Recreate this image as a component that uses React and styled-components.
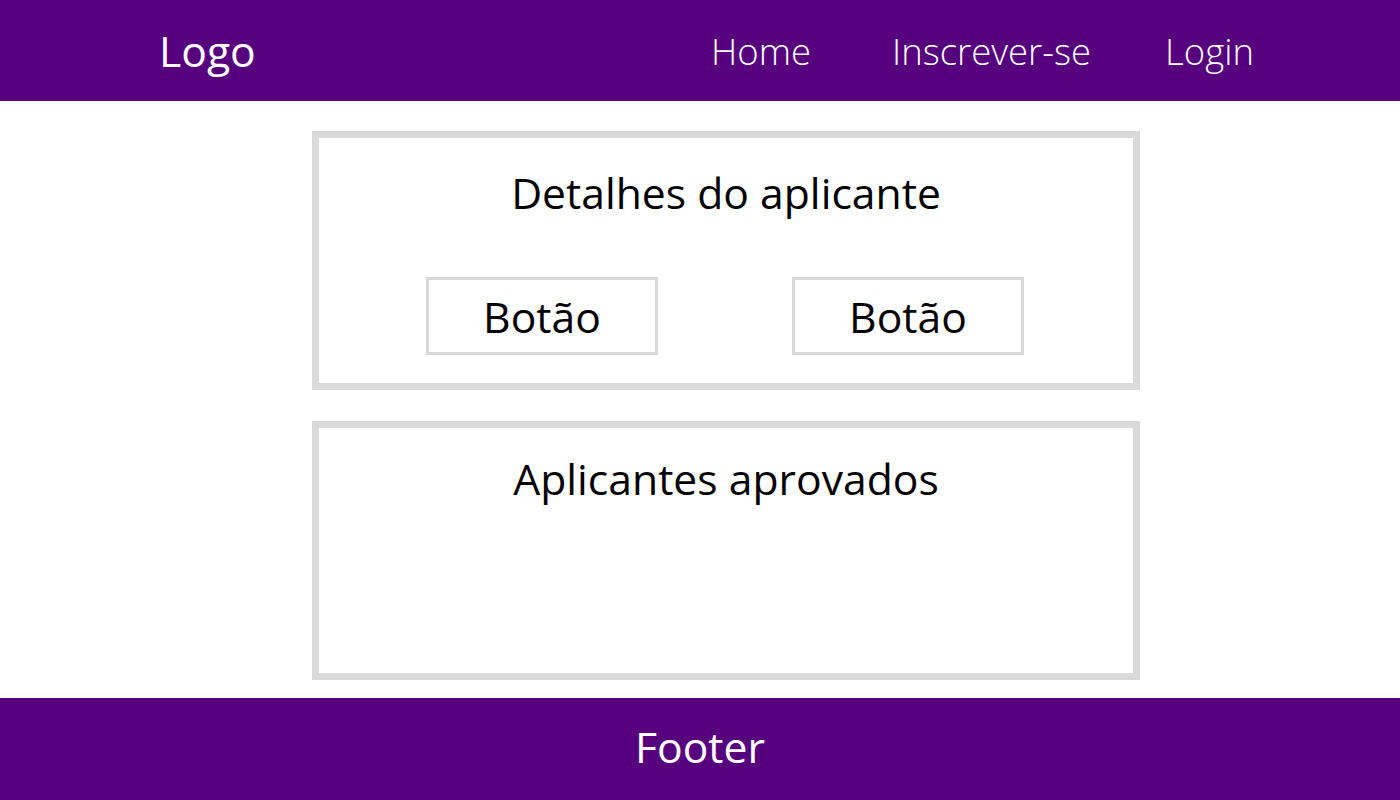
import styled, { createGlobalStyle } from "styled-components";

const purple = "#56007e";
const gray = "#d9d9d9";

const GlobalStyle = createGlobalStyle`
  * {
    box-sizing: border-box;
  }
  body {
    margin: 0;
    font-family: "Open Sans", "Noto Sans", sans-serif;
    background: #fff;
    color: #000;
  }
`;

export default function App() {
  return (
    <>
      <GlobalStyle />
      <Page>
        <Header>
          <Logo>Logo</Logo>
          <Nav>
            <NavLink>Home</NavLink>
            <NavLink>Inscrever-se</NavLink>
            <NavLink>Login</NavLink>
          </Nav>
        </Header>
        <Main>
          <Card top={30}>
            <CardTitle>Detalhes do aplicante</CardTitle>
            <Buttons>
              <Button>Botão</Button>
              <Button>Botão</Button>
            </Buttons>
          </Card>
          <Card top={26}>
            <CardTitle>Aplicantes aprovados</CardTitle>
          </Card>
        </Main>
        <Footer>Footer</Footer>
      </Page>
    </>
  );
}

const Page = styled.div`
  width: 100%;
  height: 100vh;
  display: flex;
  flex-direction: column;
`;

const Header = styled.header`
  height: 101px;
  background: ${purple};
  color: #fff;
  display: flex;
  align-items: center;
  justify-content: space-between;
  padding: 0 146px 0 159px;
`;

const Logo = styled.div`
  font-size: 42.67px;
  font-weight: 400;
`;

const Nav = styled.nav`
  display: flex;
  gap: 74px;
`;

const NavLink = styled.a`
  font-size: 36.5px;
  font-weight: 300;
  cursor: pointer;
  &:first-child {
    margin-right: 7px;
  }
`;

const Main = styled.main`
  flex: 1;
  display: flex;
  flex-direction: column;
  align-items: center;
  gap: 31px;
  padding: 30px 0 0 52px;
`;

const Card = styled.section`
  width: 828px;
  height: 259px;
  border: 7px solid ${gray};
  display: flex;
  flex-direction: column;
  align-items: center;
  padding-top: ${(p) => p.top}px;
`;

const CardTitle = styled.h2`
  margin: 0;
  font-size: 42.67px;
  font-weight: 400;
  line-height: 50px;
`;

const Buttons = styled.div`
  display: flex;
  gap: 134px;
  margin-top: 59px;
  padding-right: 2px;
`;

const Button = styled.button`
  width: 232px;
  height: 78px;
  border: 3px solid ${gray};
  background: #fff;
  font-family: inherit;
  font-size: 42.67px;
  color: #000;
  cursor: pointer;
`;

const Footer = styled.footer`
  height: 102px;
  background: ${purple};
  color: #fff;
  font-size: 42.67px;
  display: flex;
  align-items: center;
  justify-content: center;
  padding-bottom: 6px;
`;
